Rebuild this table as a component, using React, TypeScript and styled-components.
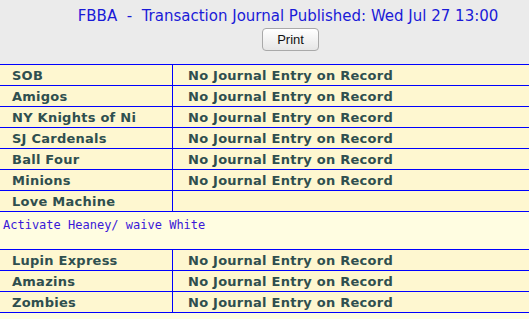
import React from 'react';
import styled, { createGlobalStyle } from 'styled-components';

const GlobalStyle = createGlobalStyle`
    html, body {
        margin: 0;
        padding: 0;
        background: #fffde1;
    }
`;

const Page = styled.div`
    width: 100%;
`;

const Header = styled.div`
    height: 64px;
    background-color: #ebebeb;
    display: flex;
    flex-direction: column;
    align-items: center;
    box-sizing: border-box;
    padding: 8px 0 0 47px;
`;

const Title = styled.div`
    font-family: 'DejaVu Sans', Verdana, sans-serif;
    font-size: 15px;
    line-height: 17px;
    color: #1a1ad8;
    white-space: pre;
`;

const PrintButton = styled.button`
    margin: 3px 0 0 5px;
    width: 57px;
    height: 23px;
    padding: 0;
    border: 1px solid #a9a9a9;
    border-radius: 4px;
    background: linear-gradient(#ffffff, #e6e6e6);
    font-family: 'Liberation Sans', Arial, sans-serif;
    font-size: 13px;
    color: #111;
`;

const Table = styled.div`
    border-top: 1px solid #0000ff;
`;

const Row = styled.div`
    display: grid;
    grid-template-columns: 173px 1fr;
    height: 21px;
    box-sizing: border-box;
    border-bottom: 1px solid #0000ff;
    background-color: #fef7d0;
`;

const Cell = styled.div<{ $first?: boolean }>`
    display: flex;
    align-items: center;
    padding-left: ${(p) => (p.$first ? '12px' : '15px')};
    border-right: ${(p) => (p.$first ? '1px solid #0000ff' : 'none')};
    font-family: 'DejaVu Sans', Verdana, sans-serif;
    font-size: 13px;
    font-weight: bold;
    letter-spacing: 0.25px;
    color: #2f4f4f;
    white-space: nowrap;
    overflow: hidden;
`;

const Note = styled.pre`
    margin: 0;
    height: 38px;
    box-sizing: border-box;
    padding: 6px 3px 0;
    border-bottom: 1px solid #0000ff;
    background-color: #fffde1;
    font-family: 'DejaVu Sans Mono', monospace;
    font-size: 12px;
    line-height: 14px;
    color: #3a18d8;
`;

type Entry = {
    team: string;
    journal: string;
    note?: string;
};

const NONE = 'No Journal Entry on Record';

const entries: Entry[] = [
    { team: 'SOB', journal: NONE },
    { team: 'Amigos', journal: NONE },
    { team: 'NY Knights of Ni', journal: NONE },
    { team: 'SJ Cardenals', journal: NONE },
    { team: 'Ball Four', journal: NONE },
    { team: 'Minions', journal: NONE },
    { team: 'Love Machine', journal: '', note: 'Activate Heaney/ waive White' },
    { team: 'Lupin Express', journal: NONE },
    { team: 'Amazins', journal: NONE },
    { team: 'Zombies', journal: NONE },
];

const App: React.FC = () => {
    return (
        <Page>
            <GlobalStyle />
            <Header>
                <Title>{'FBBA  -  Transaction Journal Published: Wed Jul 27 13:00'}</Title>
                <PrintButton>Print</PrintButton>
            </Header>
            <Table>
                {entries.map((entry) => (
                    <React.Fragment key={entry.team}>
                        <Row>
                            <Cell $first>{entry.team}</Cell>
                            <Cell>{entry.journal}</Cell>
                        </Row>
                        {entry.note && <Note>{entry.note}</Note>}
                    </React.Fragment>
                ))}
            </Table>
        </Page>
    );
};

export default App;
